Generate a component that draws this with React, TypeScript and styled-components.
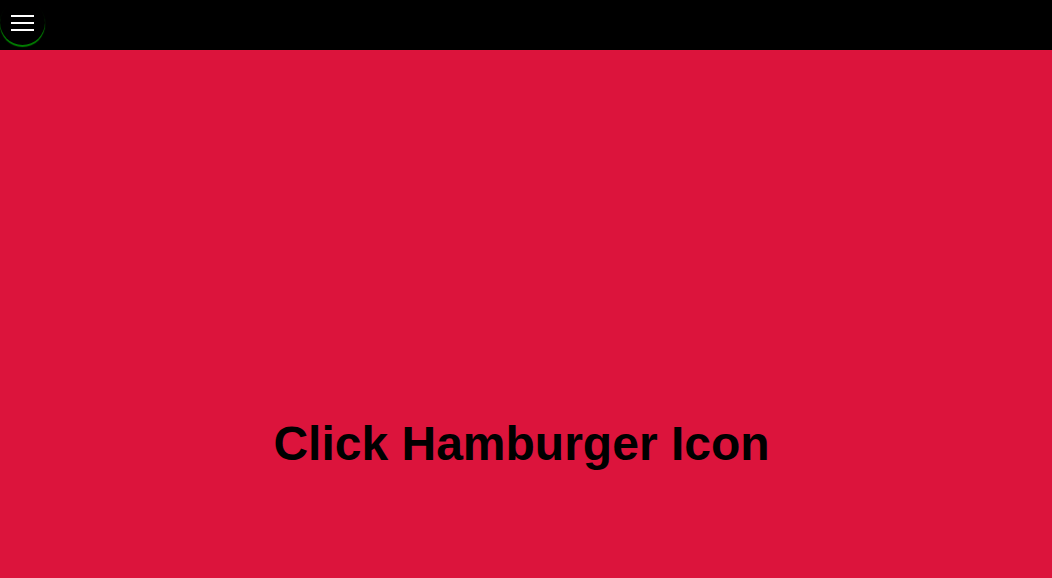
import React from "react";
import styled, { createGlobalStyle } from "styled-components";

const Global = createGlobalStyle`
  html, body { margin: 0; padding: 0; height: 100%; }
  body { font-family: "Liberation Sans", Arial, sans-serif; background: #dc143c; }
  #root { height: 100%; }
`;

const Page = styled.div`
  display: flex;
  flex-direction: column;
  height: 578px;
  overflow: hidden;
`;

const Header = styled.header`
  height: 50px;
  flex: 0 0 50px;
  background: #000;
  display: flex;
  align-items: flex-start;
`;

const MenuButton = styled.button`
  width: 45px;
  height: 45px;
  padding: 15px 0 0;
  border: none;
  border-radius: 50%;
  background: transparent;
  box-shadow: 0 2px 1px #008000;
  display: flex;
  flex-direction: column;
  align-items: center;
  justify-content: flex-start;
  gap: 5px;
  box-sizing: border-box;
  cursor: pointer;
`;

const Bar = styled.span`
  display: block;
  width: 23px;
  height: 2px;
  background: #fff;
`;

const Main = styled.main`
  flex: 1;
  background: #dc143c;
  display: flex;
  justify-content: center;
  padding-top: 366px;
  padding-right: 9px;
`;

const Title = styled.h1`
  margin: 0;
  font-family: "Liberation Sans", Arial, sans-serif;
  font-weight: bold;
  font-size: 48px;
  color: #000;
`;

export default function App() {
  return (
    <Page>
      <Global />
      <Header>
        <MenuButton aria-label="menu">
          <Bar />
          <Bar />
          <Bar />
        </MenuButton>
      </Header>
      <Main>
        <Title>Click Hamburger Icon</Title>
      </Main>
    </Page>
  );
}
